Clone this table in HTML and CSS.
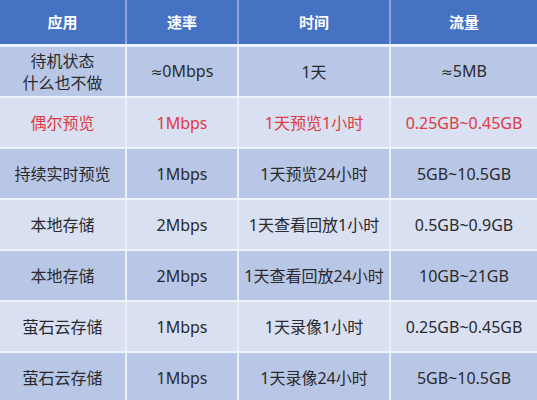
FILE: index.html
```
<!DOCTYPE html>
<html lang="zh">
<head>
<meta charset="utf-8">
<link rel="stylesheet" href="styles.css">
</head>
<body>
<table class="data">
  <colgroup>
    <col class="c1"><col class="c2"><col class="c3"><col class="c4">
  </colgroup>
  <thead>
    <tr><th>应用</th><th>速率</th><th>时间</th><th>流量</th></tr>
  </thead>
  <tbody>
    <tr class="odd"><td class="two">待机状态<br>什么也不做</td><td><span class="approx">≈</span>0Mbps</td><td>1天</td><td><span class="approx">≈</span>5MB</td></tr>
    <tr class="even red"><td>偶尔预览</td><td>1Mbps</td><td>1天预览1小时</td><td>0.25GB~0.45GB</td></tr>
    <tr class="odd"><td>持续实时预览</td><td>1Mbps</td><td>1天预览24小时</td><td>5GB~10.5GB</td></tr>
    <tr class="even"><td>本地存储</td><td>2Mbps</td><td>1天查看回放1小时</td><td>0.5GB~0.9GB</td></tr>
    <tr class="odd"><td>本地存储</td><td>2Mbps</td><td>1天查看回放24小时</td><td>10GB~21GB</td></tr>
    <tr class="even"><td>萤石云存储</td><td>1Mbps</td><td>1天录像1小时</td><td>0.25GB~0.45GB</td></tr>
    <tr class="odd"><td>萤石云存储</td><td>1Mbps</td><td>1天录像24小时</td><td>5GB~10.5GB</td></tr>
  </tbody>
</table>
</body>
</html>
```
FILE: styles.css
```
html, body {
  margin: 0;
  padding: 0;
  background: #ffffff;
  overflow: hidden;
}
.data {
  width: 537px;
  table-layout: fixed;
  border-collapse: collapse;
  font-family: "Noto Sans", "Noto Sans CJK SC", sans-serif;
  font-size: 16px;
  color: #2a2a2e;
}
.approx {
  font-family: "DejaVu Sans", sans-serif;
  font-size: 14px;
}
.c1 { width: 126px; }
.c2 { width: 112px; }
.c3 { width: 152px; }
.c4 { width: 147px; }
.data th, .data td {
  padding: 0;
  text-align: center;
  vertical-align: middle;
  border-right: 2px solid #e9eef8;
  border-bottom: 2px solid #eef2fa;
  line-height: 22px;
  white-space: nowrap;
}
.data th:last-child, .data td:last-child { border-right: none; }
.data th {
  height: 44px;
  background: #4672c4;
  color: #ffffff;
  font-weight: bold;
  font-size: 15px;
  border-right-color: #8fa8dc;
  border-bottom: 3px solid #eef2fa;
}
.data td { height: 49px; }
.odd td { background: #b8c7e5; }
.even td { background: #d8e0f1; }
.red td { color: #e03a44; }
```
